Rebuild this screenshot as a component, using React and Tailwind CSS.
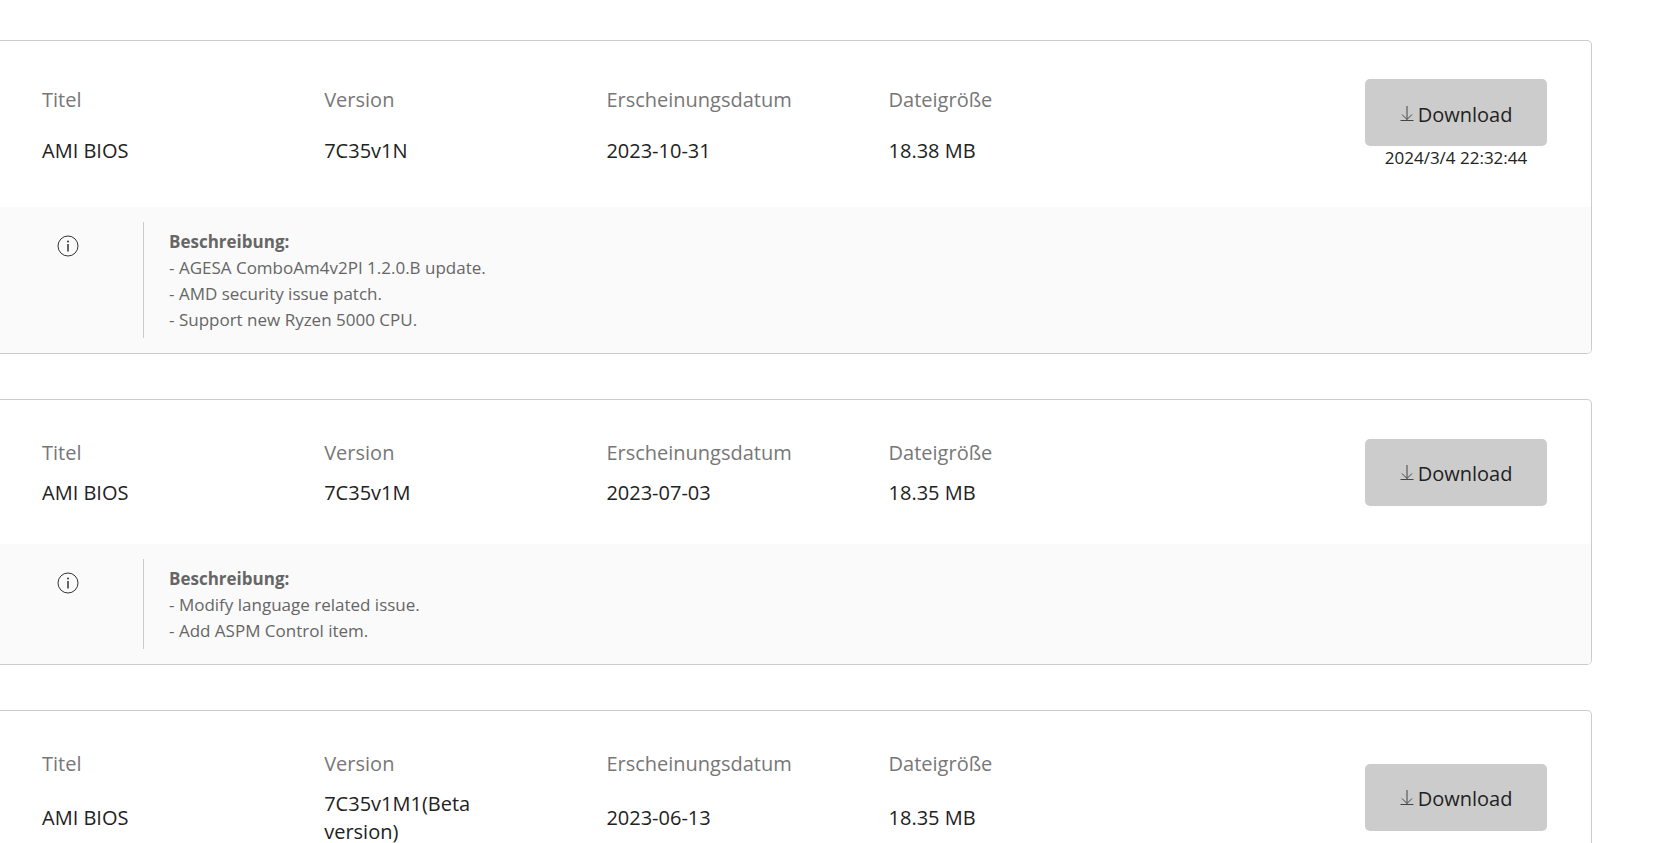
import React from 'react';

const downloads = [
  {
    id: 1,
    title: 'AMI BIOS',
    version: '7C35v1N',
    date: '2023-10-31',
    size: '18.38 MB',
    downloadedAt: '2024/3/4 22:32:44',
    notes: [
      '- AGESA ComboAm4v2PI 1.2.0.B update.',
      '- AMD security issue patch.',
      '- Support new Ryzen 5000 CPU.',
    ],
  },
  {
    id: 2,
    title: 'AMI BIOS',
    version: '7C35v1M',
    date: '2023-07-03',
    size: '18.35 MB',
    notes: ['- Modify language related issue.', '- Add ASPM Control item.'],
  },
  {
    id: 3,
    title: 'AMI BIOS',
    version: '7C35v1M1(Beta version)',
    date: '2023-06-13',
    size: '18.35 MB',
    notes: [],
  },
];

const DownloadIcon = () => (
  <svg width="14" height="18" viewBox="0 0 14 18" fill="none" stroke="#444" aria-hidden="true">
    <path d="M7 0V13.5M2 8.5L7 13.5L12 8.5" />
    <path d="M0.5 14.5H13.5" />
  </svg>
);

const InfoIcon = () => (
  <svg width="22" height="22" viewBox="0 0 22 22" fill="none" stroke="#333" aria-hidden="true">
    <circle cx="11" cy="11" r="10" />
    <path d="M11 9V16.5" strokeWidth="1.5" />
    <circle cx="11" cy="6.5" r="1" fill="#333" stroke="none" />
  </svg>
);

const Field = ({ label, value }) => (
  <>
    <dt className="text-[#777]">{label}</dt>
    <dd className="pr-[60px] text-[#222]">{value}</dd>
  </>
);

const DownloadCard = ({ item }) => (
  <article className="overflow-hidden rounded-r-[5px] border border-l-0 border-[#ccc]">
    <div className="flex py-[37px] pl-[42px] pr-11">
      <dl className="grid w-3/4 grid-flow-col grid-cols-4 grid-rows-[auto_auto] items-center gap-y-3 pt-0.5 text-xl leading-7">
        <Field label="Titel" value={item.title} />
        <Field label="Version" value={item.version} />
        <Field label="Erscheinungsdatum" value={item.date} />
        <Field label="Dateigröße" value={item.size} />
      </dl>
      <div className="flex w-1/4 flex-col items-end justify-center">
        <div className="w-[182px] py-px text-center">
          <button
            type="button"
            className="flex h-[67px] w-full cursor-pointer items-center justify-center gap-1 rounded-[5px] bg-[#ccc] pt-1 text-xl text-[#222]"
          >
            <DownloadIcon />
            Download
          </button>
          {item.downloadedAt && (
            <p className="text-[17px] leading-[23px] text-[#222]">{item.downloadedAt}</p>
          )}
        </div>
      </div>
    </div>

    {item.notes.length > 0 && (
      <div className="flex bg-[#fafafa] py-[15px] text-[#666]">
        <div className="w-[143px] pl-[57px] pt-[13px]">
          <InfoIcon />
        </div>
        <div className="border-l border-[#ccc] pb-[5px] pl-[25px] pt-[7px] text-[17px] leading-[26px]">
          <p className="font-bold">Beschreibung:</p>
          {item.notes.map((note) => (
            <p key={note}>{note}</p>
          ))}
        </div>
      </div>
    )}
  </article>
);

export default function App() {
  return (
    <main className="h-screen overflow-hidden bg-white pr-[87px] pt-10 font-['Open_Sans','Noto_Sans',sans-serif]">
      <div className="flex flex-col gap-[45px]">
        {downloads.map((item) => (
          <DownloadCard key={item.id} item={item} />
        ))}
      </div>
    </main>
  );
}
